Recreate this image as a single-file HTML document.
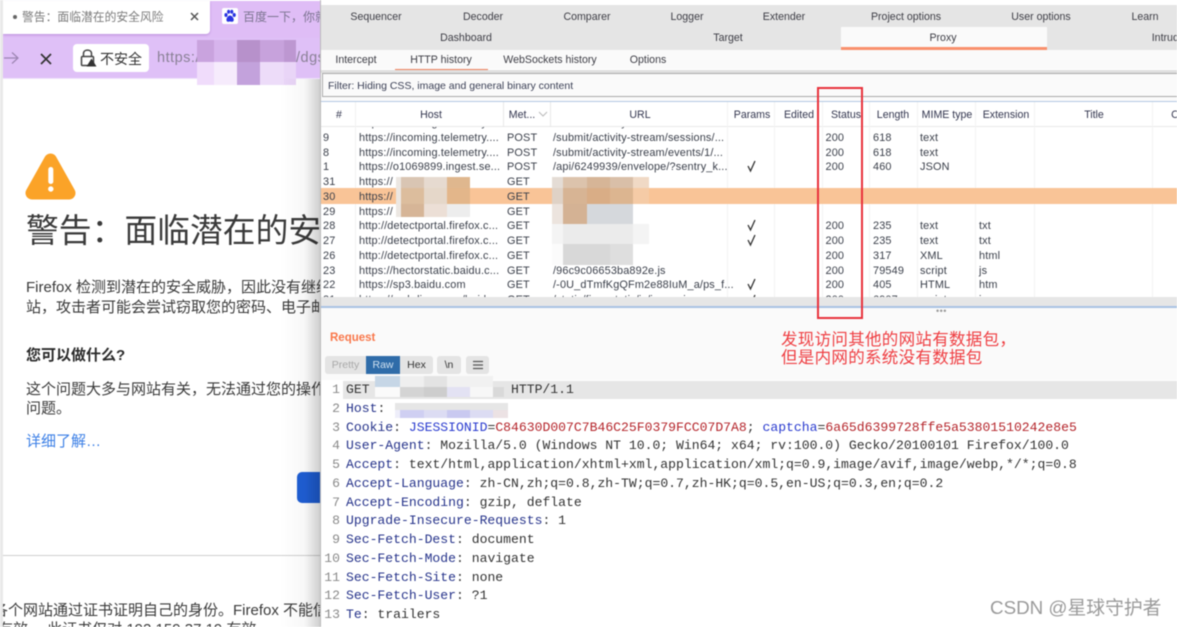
<!DOCTYPE html>
<html lang="zh-CN">
<head>
<meta charset="utf-8">
<title>警告：面临潜在的安全风险</title>
<style>
html,body{margin:0;padding:0;background:#fff}
#p{position:relative;width:1177px;height:627px;overflow:hidden;background:#fff;font-family:"Liberation Sans","Noto Sans CJK SC",sans-serif;color:#333;filter:blur(.4px)}
#p div,#p span.a{position:absolute;white-space:nowrap}
.r{position:absolute;display:block}
.zh{font-size:15px;line-height:20px;color:#3a3a3a}
.t{font-size:10.6px;line-height:14px;color:#3d3d45;transform:translateX(-50%)}
.h{font-size:10.6px;line-height:14px;color:#33364f;transform:translateX(-50%)}
.s{top:0;height:14.7px;line-height:14.7px;font-size:10.9px;letter-spacing:.15px;color:#3a3f4a}
.m{left:346px;height:19px;line-height:19px;font-family:"Liberation Mono","Noto Sans CJK SC",monospace;font-size:13.1px;color:#333}
.n{left:322px;width:18px;text-align:right;height:19px;line-height:19px;font-family:"Liberation Mono",monospace;font-size:13.1px;color:#8a8a8a}
b.k{font-weight:normal;color:#27348b}
</style>
</head>
<body>
<div id="p">
<!-- left browser -->
<div style="left:3px;top:1px;width:320px;height:37px;background:#dfbdf6"></div>
<div style="left:3px;top:1px;width:207px;height:33px;background:#fff;border-radius:0 0 4px 0;box-shadow:0 1px 2px rgba(120,60,170,.35)"></div>
<div style="left:13px;top:15px;width:4px;height:4px;border-radius:2px;background:#666"></div>
<div style="left:22px;top:8px;font-size:11.8px;line-height:18px;color:#7b7b7b">警告：面临潜在的安全风险</div>
<svg class="r" style="left:189px;top:11px" width="11" height="11"><path d="M2 2L9 9M9 2L2 9" stroke="#555" stroke-width="1.5"/></svg>
<div style="left:222px;top:8px;width:16px;height:16px;background:#fff;border-radius:2px"></div>
<svg class="r" style="left:223px;top:9px" width="14" height="14"><g fill="#2932e1"><ellipse cx="3" cy="6" rx="1.6" ry="2"/><ellipse cx="5.6" cy="2.8" rx="1.5" ry="2"/><ellipse cx="8.8" cy="2.8" rx="1.5" ry="2"/><ellipse cx="11.2" cy="6" rx="1.6" ry="2"/><path d="M7 6.5C5 6.5 3 9.5 3.5 11.5C4.2 13.5 6 12.5 7 12.5C8 12.5 10 13.5 10.7 11.5C11.2 9.5 9 6.5 7 6.5Z"/></g></svg>
<div style="left:243px;top:8px;font-size:12px;line-height:18px;color:#7b7490">百度一下，你就</div>
<div style="left:3px;top:38px;width:320px;height:40px;background:#dfc0f7"></div>
<div style="left:3px;top:78px;width:320px;height:1px;background:#efe2fb"></div>
<svg class="r" style="left:3px;top:50px" width="16" height="16"><path d="M1 8H15M9 2.500L15 8L9 13.500" stroke="#9c85b2" stroke-width="1.200" fill="none"/></svg>
<svg class="r" style="left:39px;top:52px" width="14" height="14"><path d="M2 2L12 12M12 2L2 12" stroke="#333" stroke-width="1.700"/></svg>
<div style="left:73px;top:44px;width:76px;height:28px;background:#fff;border-radius:4px"></div>
<svg class="r" style="left:79px;top:48px" width="18" height="19"><path d="M4.500 9V5.500C4.500 1 12.500 1 12.500 5.500V9" stroke="#444" stroke-width="1.500" fill="none"/><rect x="2.500" y="8.500" width="12" height="9" rx="1" stroke="#444" stroke-width="1.500" fill="#fff"/><path d="M12.500 10.500L17.500 18.500H7.500Z" fill="#333"/></svg>
<div style="left:100px;top:49px;font-size:14px;line-height:20px;color:#333">不安全</div>
<div style="left:157px;top:48px;font-size:14.500px;line-height:20px;color:#8a8196;letter-spacing:.5px">https:/</div>
<div style="left:296px;top:48px;font-size:14.500px;line-height:20px;color:#8a8196;letter-spacing:.5px">/dgs</div>
<!-- address mosaic -->
<div style="left:197px;top:40px;width:17px;height:22px;background:#c9a3de"></div>
<div style="left:214px;top:40px;width:23px;height:22px;background:#d6b4ec"></div>
<div style="left:237px;top:40px;width:23px;height:22px;background:#b791cb"></div>
<div style="left:260px;top:40px;width:24px;height:22px;background:#c7a2dc"></div>
<div style="left:284px;top:40px;width:12px;height:22px;background:#bd97d1"></div>
<div style="left:197px;top:62px;width:17px;height:23px;background:#f0dcfb"></div>
<div style="left:214px;top:62px;width:23px;height:23px;background:#f6ebfc"></div>
<div style="left:237px;top:62px;width:23px;height:23px;background:#c3a2dc"></div>
<div style="left:260px;top:62px;width:24px;height:23px;background:#eddcf9"></div>
<div style="left:284px;top:62px;width:12px;height:23px;background:#e9d5f7"></div>
<!-- warning icon -->
<svg class="r" style="left:24px;top:151px" width="54" height="50"><path d="M26.500 9L8 42H45Z" fill="#fba328" stroke="#fba328" stroke-width="13" stroke-linejoin="round"/><rect x="24.300" y="16" width="5" height="17" rx="2.400" fill="#fff"/><circle cx="26.800" cy="38" r="2.700" fill="#fff"/></svg>
<div style="left:26px;top:209px;font-size:32.800px;line-height:44px;color:#3a3a3a">警告：面临潜在的安全风险</div>
<div class="zh" style="left:26px;top:278px">Firefox 检测到潜在的安全威胁，因此没有继续前往该网</div>
<div class="zh" style="left:26px;top:298px">站，攻击者可能会尝试窃取您的密码、电子邮件或信用卡信息。</div>
<div class="zh" style="left:26px;top:346px;font-weight:bold;color:#2a2a2a">您可以做什么?</div>
<div class="zh" style="left:26px;top:380px">这个问题大多与网站有关，无法通过您的操作解决。</div>
<div class="zh" style="left:26px;top:399px">问题。</div>
<div class="zh" style="left:26px;top:432px;color:#3b7fe6">详细了解…</div>
<div style="left:297px;top:472px;width:40px;height:31px;background:#1f5ed4;border-radius:5px"></div>
<div style="left:3px;top:555px;width:320px;height:1px;background:#cfcfcf"></div>
<div class="zh" style="left:-7px;top:601px">各个网站通过证书证明自己的身份。Firefox 不能信任</div>
<div class="zh" style="left:-2px;top:620px">有效。 此证书仅对 192.159.37.19 有效。</div>
<div style="left:0;top:0;width:3px;height:627px;background:#e9e9e9"></div>
<div style="left:280px;top:79px;width:41px;height:548px;background:linear-gradient(90deg,rgba(0,0,0,0),rgba(0,0,0,.03) 60%,rgba(0,0,0,.2))"></div>
<!-- burp -->
<div style="left:320px;top:0;width:857px;height:627px;background:#fff;border-left:1px solid #bbb;box-sizing:border-box"></div>
<div style="left:321px;top:5px;width:856px;height:45px;background:#e5e5e5"></div>
<div style="left:841px;top:27px;width:206px;height:20px;background:#fafafa"></div>
<div style="left:841px;top:47px;width:206px;height:2.500px;background:#f9906c"></div>
<div class="t" style="left:376px;top:10px">Sequencer</div>
<div class="t" style="left:483px;top:10px">Decoder</div>
<div class="t" style="left:587px;top:10px">Comparer</div>
<div class="t" style="left:687px;top:10px">Logger</div>
<div class="t" style="left:784px;top:10px">Extender</div>
<div class="t" style="left:906px;top:10px">Project options</div>
<div class="t" style="left:1041px;top:10px">User options</div>
<div class="t" style="left:1145px;top:10px">Learn</div>
<div class="t" style="left:466px;top:31px">Dashboard</div>
<div class="t" style="left:728px;top:31px">Target</div>
<div class="t" style="left:943px;top:31px">Proxy</div>
<div class="t" style="left:1170px;top:31px">Intruder</div>
<div style="left:321px;top:50px;width:856px;height:19px;background:#fafafa"></div>
<div class="t" style="left:356px;top:53px">Intercept</div>
<div class="t" style="left:441px;top:53px">HTTP history</div>
<div class="t" style="left:550px;top:53px">WebSockets history</div>
<div class="t" style="left:648px;top:53px">Options</div>
<div style="left:395px;top:68.500px;width:93px;height:1.500px;background:#f0805c"></div>
<div style="left:321px;top:70px;width:856px;height:3px;background:#e0e0e0"></div>
<div style="left:322px;top:73px;width:860px;height:24px;background:#fafafa;border:1px solid #aaa;box-sizing:border-box"></div>
<div class="t" style="left:328px;top:79px;transform:none;font-size:10.500px;color:#3a3f55">Filter: Hiding CSS, image and general binary content</div>
<div style="left:321px;top:97px;width:856px;height:4px;background:#fafafa"></div>
<div style="left:321px;top:101px;width:856px;height:1px;background:#b4c9e4"></div>
<!-- table head -->
<div style="left:321px;top:102px;width:856px;height:24px;background:#fff"></div>
<div style="left:321px;top:126px;width:856px;height:1px;background:#e8e8e8"></div>
<div style="left:355px;top:102px;width:1px;height:195px;background:#f2f2f2"></div>
<div style="left:503px;top:102px;width:1px;height:24px;background:#e8e8e8"></div>
<div style="left:550px;top:102px;width:1px;height:24px;background:#e8e8e8"></div>
<div style="left:727px;top:102px;width:1px;height:195px;background:#f3f3f3"></div>
<div style="left:774px;top:102px;width:1px;height:195px;background:#f3f3f3"></div>
<div style="left:822px;top:102px;width:1px;height:195px;background:#f3f3f3"></div>
<div style="left:869px;top:102px;width:1px;height:195px;background:#f3f3f3"></div>
<div style="left:917px;top:102px;width:1px;height:195px;background:#f3f3f3"></div>
<div style="left:975px;top:102px;width:1px;height:195px;background:#f3f3f3"></div>
<div style="left:1034px;top:102px;width:1px;height:195px;background:#f3f3f3"></div>
<div style="left:1152px;top:102px;width:1px;height:195px;background:#f3f3f3"></div>
<div class="h" style="left:339px;top:108px">#</div>
<div class="h" style="left:431px;top:108px">Host</div>
<div class="h" style="left:522px;top:108px">Met...</div>
<svg class="r" style="left:538px;top:111px" width="10" height="7"><path d="M1 1L5 5L9 1" stroke="#bbb" fill="none"/></svg>
<div class="h" style="left:640px;top:108px">URL</div>
<div class="h" style="left:752px;top:108px">Params</div>
<div class="h" style="left:799px;top:108px">Edited</div>
<div class="h" style="left:846px;top:108px">Status</div>
<div class="h" style="left:893px;top:108px">Length</div>
<div class="h" style="left:947px;top:108px">MIME type</div>
<div class="h" style="left:1006px;top:108px">Extension</div>
<div class="h" style="left:1094px;top:108px">Title</div>
<div class="h" style="left:1175px;top:108px">C</div>
<!-- rows -->
<div style="left:321px;top:127px;width:856px;height:170px;overflow:hidden">
  <div style="left:0;top:61px;width:856px;height:16px;background:#f9c497"></div>
  <div style="left:0;top:1px;width:856px;height:170px">
  <div style="left:0;top:-12px;width:856px;height:15px"><div class="s" style="left:38px">https://incoming.telemetry....</div><div class="s" style="left:186px">POST</div><div class="s" style="left:232px">/submit/activity-stream/sessions/...</div></div>
  <div style="left:0;top:3px;width:856px;height:15px"><div class="s" style="left:2px">9</div><div class="s" style="left:38px">https://incoming.telemetry....</div><div class="s" style="left:186px">POST</div><div class="s" style="left:232px">/submit/activity-stream/sessions/...</div><div class="s" style="left:504.500px">200</div><div class="s" style="left:552px">618</div><div class="s" style="left:599px">text</div></div>
  <div style="left:0;top:18px;width:856px;height:15px"><div class="s" style="left:2px">8</div><div class="s" style="left:38px">https://incoming.telemetry....</div><div class="s" style="left:186px">POST</div><div class="s" style="left:232px">/submit/activity-stream/events/1/...</div><div class="s" style="left:504.500px">200</div><div class="s" style="left:552px">618</div><div class="s" style="left:599px">text</div></div>
  <div style="left:0;top:32px;width:856px;height:15px"><div class="s" style="left:2px">1</div><div class="s" style="left:38px">https://o1069899.ingest.se...</div><div class="s" style="left:186px">POST</div><div class="s" style="left:232px">/api/6249939/envelope/?sentry_k...</div><div class="s" style="left:504.500px">200</div><div class="s" style="left:552px">460</div><div class="s" style="left:599px">JSON</div></div>
  <div style="left:0;top:47px;width:856px;height:15px"><div class="s" style="left:2px">31</div><div class="s" style="left:38px">https://</div><div class="s" style="left:186px">GET</div></div>
  <div style="left:0;top:62px;width:856px;height:15px"><div class="s" style="left:2px">30</div><div class="s" style="left:38px">https://</div><div class="s" style="left:186px">GET</div></div>
  <div style="left:0;top:77px;width:856px;height:15px"><div class="s" style="left:2px">29</div><div class="s" style="left:38px">https://</div><div class="s" style="left:186px">GET</div></div>
  <div style="left:0;top:91px;width:856px;height:15px"><div class="s" style="left:2px">28</div><div class="s" style="left:38px">http://detectportal.firefox.c...</div><div class="s" style="left:186px">GET</div><div class="s" style="left:504.500px">200</div><div class="s" style="left:552px">235</div><div class="s" style="left:599px">text</div><div class="s" style="left:658px">txt</div></div>
  <div style="left:0;top:106px;width:856px;height:15px"><div class="s" style="left:2px">27</div><div class="s" style="left:38px">http://detectportal.firefox.c...</div><div class="s" style="left:186px">GET</div><div class="s" style="left:504.500px">200</div><div class="s" style="left:552px">235</div><div class="s" style="left:599px">text</div><div class="s" style="left:658px">txt</div></div>
  <div style="left:0;top:121px;width:856px;height:15px"><div class="s" style="left:2px">26</div><div class="s" style="left:38px">http://detectportal.firefox.c...</div><div class="s" style="left:186px">GET</div><div class="s" style="left:504.500px">200</div><div class="s" style="left:552px">317</div><div class="s" style="left:599px">XML</div><div class="s" style="left:658px">html</div></div>
  <div style="left:0;top:136px;width:856px;height:15px"><div class="s" style="left:2px">23</div><div class="s" style="left:38px">https://hectorstatic.baidu.c...</div><div class="s" style="left:186px">GET</div><div class="s" style="left:232px">/96c9c06653ba892e.js</div><div class="s" style="left:504.500px">200</div><div class="s" style="left:552px">79549</div><div class="s" style="left:599px">script</div><div class="s" style="left:658px">js</div></div>
  <div style="left:0;top:150px;width:856px;height:15px"><div class="s" style="left:2px">22</div><div class="s" style="left:38px">https://sp3.baidu.com</div><div class="s" style="left:186px">GET</div><div class="s" style="left:232px">/-0U_dTmfKgQFm2e88IuM_a/ps_f...</div><div class="s" style="left:504.500px">200</div><div class="s" style="left:552px">405</div><div class="s" style="left:599px">HTML</div><div class="s" style="left:658px">htm</div></div>
  <div style="left:0;top:165px;width:856px;height:15px"><div class="s" style="left:2px">21</div><div class="s" style="left:38px">https://ss.bdimg.com/baidu...</div><div class="s" style="left:186px">GET</div><div class="s" style="left:232px">/static/fisp_static/js/jquery.js</div><div class="s" style="left:504.500px">200</div><div class="s" style="left:552px">6907</div><div class="s" style="left:599px">script</div><div class="s" style="left:658px">js</div></div>
  </div>
</div>
<!-- checks -->
<svg class="r" style="left:740px;top:128px" width="24" height="174"><path d="M8 38L10.500 43L15 33M8 97L10.500 102L15 92M8 112L10.500 117L15 107M8 156L10.500 161L15 151M8 172L10.500 177L15 167" stroke="#333" stroke-width="1.300" fill="none"/></svg>
<!-- table mosaics -->
<div style="left:396px;top:177px;width:5px;height:40px;background:#ece7e2"></div>
<div style="left:401px;top:177px;width:23px;height:11px;background:#d9c5b3"></div>
<div style="left:424px;top:177px;width:23px;height:11px;background:#e6dad0"></div>
<div style="left:447px;top:177px;width:23px;height:11px;background:#dfb78e"></div>
<div style="left:401px;top:188px;width:23px;height:16px;background:#dcbd9d"></div>
<div style="left:424px;top:188px;width:23px;height:16px;background:#e5d7c9"></div>
<div style="left:447px;top:188px;width:23px;height:16px;background:#e3b68a"></div>
<div style="left:401px;top:204px;width:23px;height:13px;background:#d6b597"></div>
<div style="left:424px;top:204px;width:23px;height:13px;background:#ecdfd6"></div>
<div style="left:447px;top:204px;width:23px;height:13px;background:#ededed"></div>
<div style="left:552px;top:177px;width:11px;height:11px;background:#e4dcd5"></div>
<div style="left:563px;top:177px;width:24px;height:11px;background:#dcc3ac"></div>
<div style="left:587px;top:177px;width:23px;height:11px;background:#d6b597"></div>
<div style="left:610px;top:177px;width:23px;height:11px;background:#d9bfa8"></div>
<div style="left:633px;top:177px;width:16px;height:11px;background:#f0d9c5"></div>
<div style="left:552px;top:188px;width:11px;height:16px;background:#dfd2c6"></div>
<div style="left:563px;top:188px;width:24px;height:16px;background:#d7b494"></div>
<div style="left:587px;top:188px;width:23px;height:16px;background:#d9ad86"></div>
<div style="left:610px;top:188px;width:23px;height:16px;background:#dcb590"></div>
<div style="left:633px;top:188px;width:16px;height:16px;background:#f5cba6"></div>
<div style="left:552px;top:204px;width:11px;height:20px;background:#ece4de"></div>
<div style="left:563px;top:204px;width:24px;height:20px;background:#d4b294"></div>
<div style="left:587px;top:204px;width:46px;height:20px;background:#d5d8dc"></div>
<div style="left:552px;top:224px;width:97px;height:20px;background:#f4f4f4"></div>
<div style="left:563px;top:224px;width:70px;height:20px;background:#ebebeb"></div>
<div style="left:552px;top:244px;width:11px;height:21px;background:#fbfbfb"></div>
<div style="left:563px;top:244px;width:47px;height:21px;background:#d8d8d8"></div>
<div style="left:610px;top:244px;width:23px;height:21px;background:#dedede"></div>
<!-- divider -->
<div style="left:321px;top:297px;width:856px;height:9px;background:#e6e6e6"></div>
<div style="left:321px;top:306px;width:856px;height:1.500px;background:#a9c3e3"></div>
<div style="left:321px;top:308px;width:856px;height:72px;background:#fafafa"></div>
<div style="left:936px;top:307px;font-size:9px;line-height:8px;color:#999;letter-spacing:.5px">•••</div>
<div style="left:330px;top:330px;font-size:11.500px;line-height:16px;font-weight:bold;color:#f9774a">Request</div>
<div style="left:325px;top:356px;width:41px;height:18px;background:#e4e4e4;border-radius:3px 0 0 3px;font-size:10.500px;line-height:18px;text-align:center;color:#a8a8a8">Pretty</div>
<div style="left:366px;top:356px;width:34px;height:18px;background:#2f6ca9;font-size:10.500px;line-height:18px;text-align:center;color:#cfe0ef">Raw</div>
<div style="left:400px;top:356px;width:33px;height:18px;background:#e4e4e4;border-radius:0 3px 3px 0;font-size:10.500px;line-height:18px;text-align:center;color:#333">Hex</div>
<div style="left:437px;top:356px;width:24px;height:18px;background:#e4e4e4;border-radius:3px;font-size:10.500px;line-height:18px;text-align:center;color:#333">\n</div>
<div style="left:466px;top:356px;width:23px;height:18px;background:#e4e4e4;border-radius:3px"></div>
<svg class="r" style="left:472px;top:360px" width="12" height="10"><path d="M1 1.500H11M1 5H11M1 8.500H11" stroke="#555" stroke-width="1.200"/></svg>
<!-- editor -->
<div style="left:321px;top:380px;width:856px;height:247px;background:#fff"></div>
<div style="left:343px;top:381px;width:834px;height:18px;background:#e6e6e6"></div>
<div class="n" style="top:380px">1</div><div class="n" style="top:398.750px">2</div><div class="n" style="top:417.500px">3</div><div class="n" style="top:436.250px">4</div><div class="n" style="top:455px">5</div><div class="n" style="top:473.750px">6</div><div class="n" style="top:492.500px">7</div><div class="n" style="top:511.250px">8</div><div class="n" style="top:530px">9</div><div class="n" style="top:548.750px">10</div><div class="n" style="top:567.500px">11</div><div class="n" style="top:586.250px">12</div><div class="n" style="top:605px">13</div>
<div class="m" style="top:380px">GET</div>
<div class="m" style="top:380px;left:511px">HTTP/1.1</div>
<div class="m" style="top:398.750px"><b class="k">Host</b>:</div>
<div class="m" style="top:417.500px"><b class="k">Cookie</b>: <b class="k" style="color:#2a3bcf">JSESSIONID</b>=<b class="k" style="color:#b5262c">C84630D007C7B46C25F0379FCC07D7A8</b>; <b class="k" style="color:#2a3bcf">captcha</b>=<b class="k" style="color:#b5262c">6a65d6399728ffe5a53801510242e8e5</b></div>
<div class="m" style="top:436.250px"><b class="k">User-Agent</b>: Mozilla/5.0 (Windows NT 10.0; Win64; x64; rv:100.0) Gecko/20100101 Firefox/100.0</div>
<div class="m" style="top:455px"><b class="k">Accept</b>: text/html,application/xhtml+xml,application/xml;q=0.9,image/avif,image/webp,*/*;q=0.8</div>
<div class="m" style="top:473.750px"><b class="k">Accept-Language</b>: zh-CN,zh;q=0.8,zh-TW;q=0.7,zh-HK;q=0.5,en-US;q=0.3,en;q=0.2</div>
<div class="m" style="top:492.500px"><b class="k">Accept-Encoding</b>: gzip, deflate</div>
<div class="m" style="top:511.250px"><b class="k">Upgrade-Insecure-Requests</b>: 1</div>
<div class="m" style="top:530px"><b class="k">Sec-Fetch-Dest</b>: document</div>
<div class="m" style="top:548.750px"><b class="k">Sec-Fetch-Mode</b>: navigate</div>
<div class="m" style="top:567.500px"><b class="k">Sec-Fetch-Site</b>: none</div>
<div class="m" style="top:586.250px"><b class="k">Sec-Fetch-User</b>: ?1</div>
<div class="m" style="top:605px"><b class="k">Te</b>: trailers</div>
<!-- request mosaics -->
<div style="left:375px;top:376px;width:25px;height:11px;background:#c6d6e6"></div>
<div style="left:400px;top:376px;width:24px;height:11px;background:#efefef"></div>
<div style="left:424px;top:376px;width:23px;height:11px;background:#e3e3e3"></div>
<div style="left:447px;top:376px;width:46px;height:11px;background:#f1f1f1"></div>
<div style="left:375px;top:387px;width:25px;height:10px;background:#fafafa"></div>
<div style="left:400px;top:387px;width:24px;height:10px;background:#d4d4d4"></div>
<div style="left:424px;top:387px;width:23px;height:10px;background:#cdcdcd"></div>
<div style="left:447px;top:387px;width:23px;height:10px;background:#e3e2f3"></div>
<div style="left:470px;top:387px;width:23px;height:10px;background:#f7f7f7"></div>
<div style="left:493px;top:387px;width:11px;height:10px;background:#d9d9d9"></div>
<div style="left:395px;top:403px;width:113px;height:7px;background:#e6e6e6"></div>
<div style="left:395px;top:410px;width:5px;height:8px;background:#eeeefa"></div>
<div style="left:400px;top:410px;width:24px;height:8px;background:#cfcff2"></div>
<div style="left:424px;top:410px;width:23px;height:8px;background:#dcdcf3"></div>
<div style="left:447px;top:410px;width:23px;height:8px;background:#c9c9f0"></div>
<div style="left:470px;top:410px;width:23px;height:8px;background:#dcdcf3"></div>
<div style="left:493px;top:410px;width:15px;height:8px;background:#ece2e4"></div>
<!-- annotation -->
<div style="left:817px;top:87px;width:46px;height:232px;border:2px solid #e8323c;box-sizing:border-box"></div>
<div style="left:781px;top:329px;font-size:16.500px;line-height:18px;color:#ef3e42;font-family:'WenQuanYi Zen Hei','Noto Sans CJK SC',sans-serif;letter-spacing:.3px">发现访问其他的网站有数据包，</div>
<div style="left:781px;top:347px;font-size:16.500px;line-height:18px;color:#ef3e42;font-family:'WenQuanYi Zen Hei','Noto Sans CJK SC',sans-serif;letter-spacing:.3px">但是内网的系统没有数据包</div>
<div style="left:990px;top:597px;font-size:18.800px;line-height:22px;color:#9a9a9a">CSDN @星球守护者</div>
</div>
</body>
</html>
